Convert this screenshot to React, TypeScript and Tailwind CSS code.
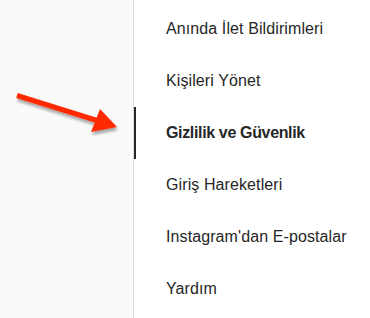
import React from "react";

const items = [
  "Anında İlet Bildirimleri",
  "Kişileri Yönet",
  "Gizlilik ve Güvenlik",
  "Giriş Hareketleri",
  "Instagram'dan E-postalar",
  "Yardım",
];

const active = "Gizlilik ve Güvenlik";

function Arrow() {
  return (
    <svg
      className="pointer-events-none absolute left-0 top-0"
      width="134"
      height="160"
      viewBox="0 0 134 160"
    >
      <defs>
        <filter id="sh" x="-20%" y="-20%" width="140%" height="160%">
          <feGaussianBlur in="SourceAlpha" stdDeviation="1.6" />
          <feOffset dx="1" dy="3" result="b" />
          <feComponentTransfer>
            <feFuncA type="linear" slope="0.35" />
          </feComponentTransfer>
          <feMerge>
            <feMergeNode />
            <feMergeNode in="SourceGraphic" />
          </feMerge>
        </filter>
      </defs>
      <g filter="url(#sh)">
        <line
          x1="17"
          y1="95.5"
          x2="97"
          y2="120.5"
          stroke="#ff2a00"
          strokeWidth="5"
        />
        <polygon points="100,109 117,127 91,132" fill="#ff2a00" />
      </g>
    </svg>
  );
}

export default function App() {
  return (
    <div
      className="relative flex h-[318px] w-[370px] overflow-hidden bg-white"
      style={{ fontFamily: '"Liberation Sans", Arial, sans-serif' }}
    >
      <div className="w-[134px] shrink-0 border-r border-[#dbdbdb] bg-[#fafafa]" />
      <ul className="flex flex-1 flex-col pt-[3px]">
        {items.map((label) => (
          <li
            key={label}
            className={
              label === active
                ? "border-l-2 border-[#262626] py-4 pl-[30px] pr-4 text-base leading-5 font-bold tracking-[-0.35px] text-[#262626]"
                : "border-l-2 border-transparent py-4 pl-[30px] pr-4 text-base leading-5 tracking-[0.1px] text-[#262626]"
            }
          >
            {label}
          </li>
        ))}
      </ul>
      <Arrow />
    </div>
  );
}
